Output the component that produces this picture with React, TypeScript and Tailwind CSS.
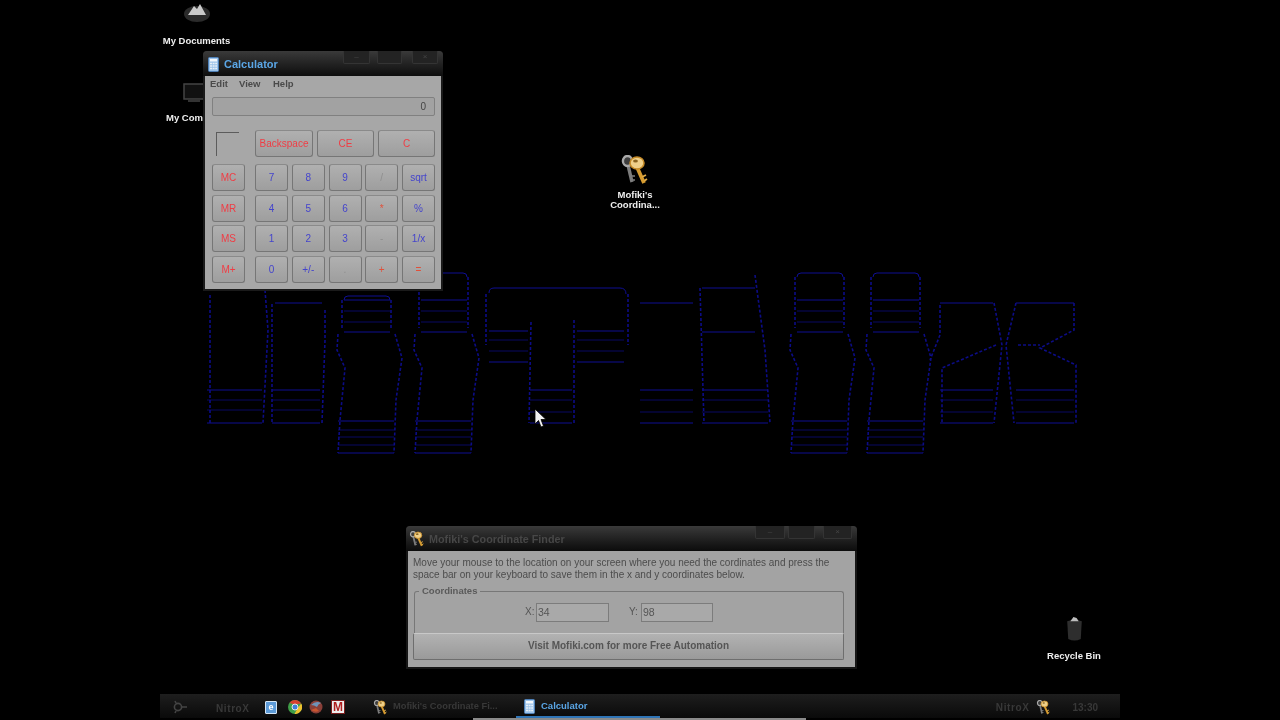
import React from "react";

const hatch = (x1: number, x2: number, ys: number[]) =>
  ys.map((y) => `M${x1} ${y}H${x2}`).join("");
const side = (x: number, y1: number, y2: number) => `M${x} ${y1}V${y2}`;

// one of the tall "D" shaped letters of the wallpaper
function letterD(dx: number, top: number) {
  const solid =
    `M${dx + 8} ${top + 4}Q${dx + 8} ${top} ${dx + 12} ${top}H${dx + 50}Q${dx + 54} ${top} ${dx + 54} ${top + 4}` +
    hatch(dx + 8, dx + 54, [300, 332]) +
    hatch(dx + 2, dx + 58, [421, 453]);
  const faint = hatch(dx + 8, dx + 54, [311, 322]) + hatch(dx + 2, dx + 58, [430, 437, 445]);
  const dotted =
    side(dx + 6, top + 4, 328) +
    side(dx + 55, top + 4, 328) +
    `M${dx + 2} 334L${dx + 1} 350L${dx + 9} 368L${dx + 4} 420L${dx + 2} 453` +
    `M${dx + 59} 334L${dx + 66} 358L${dx + 60} 400L${dx + 58} 453`;
  return { solid, faint, dotted };
}

function Wallpaper() {
  const ds = [letterD(336, 296), letterD(413, 273), letterD(789, 273), letterD(865, 273)];
  const solid =
    ds.map((d) => d.solid).join("") +
    hatch(207, 262, [390, 423]) +
    hatch(272, 320, [390, 423]) +
    "M275 303H322" +
    "M489 293Q489 288 494 288H620Q626 288 626 294" +
    hatch(489, 528, [331, 362]) +
    hatch(577, 624, [331, 362]) +
    hatch(530, 572, [390, 423]) +
    hatch(640, 693, [303, 390, 423]) +
    hatch(702, 755, [288, 332]) +
    hatch(702, 768, [390, 423]) +
    hatch(940, 993, [303, 390, 423]) +
    hatch(1016, 1074, [303, 390, 423]);
  const faint =
    ds.map((d) => d.faint).join("") +
    hatch(207, 262, [400, 410]) +
    hatch(272, 320, [400, 410]) +
    hatch(489, 528, [340, 351]) +
    hatch(577, 624, [340, 351]) +
    hatch(530, 572, [400, 412]) +
    hatch(640, 693, [400, 412]) +
    hatch(702, 768, [400, 412]) +
    hatch(940, 993, [400, 412]) +
    hatch(1016, 1074, [400, 412]);
  const dotted =
    ds.map((d) => d.dotted).join("") +
    side(210, 295, 423) +
    "M265 290L268 330L263 423" +
    "M272 304V423M325 310V340L322 423" +
    side(486, 294, 345) +
    side(628, 294, 345) +
    "M531 322L529 423M574 320V423" +
    "M700 288L704 423M755 275L765 350L770 423" +
    "M940 305V335L930 360M996 345L942 368V423" +
    "M994 303L1002 345L994 423M1016 303L1006 345L1014 423" +
    "M1074 303V330L1040 348L1076 365V423M1018 345H1040";

  return (
    <svg
      className="absolute left-0 top-0"
      width="1280"
      height="720"
      viewBox="0 0 1280 720"
      fill="none"
    >
      <path d={faint} stroke="#080862" strokeWidth="1" />
      <path d={solid} stroke="#0e0e92" strokeWidth="1" />
      <path d={dotted} stroke="#0c0c86" strokeWidth="1.6" strokeDasharray="3 2" />
    </svg>
  );
}

function KeysIcon({ size = 28 }: { size?: number }) {
  return (
    <svg width={size} height={size} viewBox="0 0 28 30" fill="none">
      {/* grey key behind */}
      <path d="M7 10L11 27" stroke="#7d7d7d" strokeWidth="3.4" />
      <path d="M10 21h4M11 25h3" stroke="#7d7d7d" strokeWidth="1.6" />
      <ellipse cx="6.5" cy="6" rx="4.6" ry="5" fill="#3d3d3d" stroke="#a9a9a9" strokeWidth="2.4" />
      {/* gold key in front */}
      <path d="M16 12L23 28" stroke="#d69b2f" strokeWidth="3.8" />
      <path d="M21 22l4-2M23 26l3-2" stroke="#e0aa45" strokeWidth="1.8" />
      <ellipse cx="16" cy="8" rx="7" ry="6" fill="#efd08a" stroke="#c58b28" strokeWidth="1.6" />
      <ellipse cx="14.5" cy="6" rx="2.4" ry="1.6" fill="#8a6420" />
    </svg>
  );
}

function CalcIcon() {
  return (
    <svg width="11" height="15" viewBox="0 0 11 15">
      <rect x="0.5" y="0.5" width="10" height="14" rx="1" fill="#9cc3ea" stroke="#4d7fb6" />
      <rect x="2" y="2" width="7" height="2.5" fill="#f4f8fc" />
      <path d="M2 6.5h7M2 9h7M2 11.5h7" stroke="#e8f0f8" strokeWidth="1.3" strokeDasharray="2 0.6" />
    </svg>
  );
}

function DesktopLabel({ children }: { children: React.ReactNode }) {
  return (
    <div className="text-center text-[9.5px] leading-[10px] font-bold text-[#eeeeee] whitespace-nowrap">
      {children}
    </div>
  );
}

function CalcButton({
  label,
  color = "blue",
  className = "",
}: {
  label: string;
  color?: "red" | "blue" | "orange" | "gray";
  className?: string;
}) {
  const tone = {
    red: "text-[#f03c44]",
    blue: "text-[#4444cc]",
    orange: "text-[#e0503a]",
    gray: "text-[#8f8f8f]",
  }[color];
  return (
    <div
      className={`shrink-0 h-[27px] flex items-center justify-center rounded-[3px] border border-[#767676] border-t-[#8a8a8a] bg-gradient-to-b from-[#b0b0b0] to-[#9e9e9e] text-[10px] ${tone} ${className}`}
    >
      {label}
    </div>
  );
}

function TitleButtons({ widths, gaps }: { widths: number[]; gaps: number[] }) {
  return (
    <div className="flex">
      {widths.map((w, i) => (
        <div
          key={i}
          style={{ width: w, marginLeft: i > 0 ? gaps[i - 1] : 0 }}
          className="h-[13px] rounded-b-[2px] border border-t-0 border-[#343434] bg-[#232323] flex items-center justify-center text-[8px] leading-none text-[#454545]"
        >
          {i === 0 ? "–" : i === 2 ? "×" : ""}
        </div>
      ))}
    </div>
  );
}

const rows: [string, "blue" | "orange" | "gray"][][] = [
  [["7", "blue"], ["8", "blue"], ["9", "blue"], ["/", "gray"], ["sqrt", "blue"]],
  [["4", "blue"], ["5", "blue"], ["6", "blue"], ["*", "orange"], ["%", "blue"]],
  [["1", "blue"], ["2", "blue"], ["3", "blue"], ["-", "gray"], ["1/x", "blue"]],
  [["0", "blue"], ["+/-", "blue"], [".", "gray"], ["+", "orange"], ["=", "orange"]],
];

function Calculator() {
  return (
    <div className="absolute left-[203px] top-[51px] w-[240px] h-[240px] flex flex-col rounded-t-[4px] bg-[#1a1a1a] px-[2px] pb-[2px]">
      <div className="h-[25px] shrink-0 flex items-start bg-gradient-to-b from-[#3a3a3a] to-[#0e0e0e] -mx-[2px] rounded-t-[4px] pl-[5px] pr-[5px]">
        <div className="mt-[5px] flex items-center gap-[5px]">
          <CalcIcon />
          <span className="text-[11px] font-bold text-[#5aa6e6]">Calculator</span>
        </div>
        <div className="ml-auto">
          <TitleButtons widths={[27, 25, 26]} gaps={[7, 10]} />
        </div>
      </div>
      <div className="flex-1 bg-[#a7a7a7] pl-[7px] pr-[6px]">
        <div className="h-[16px] flex items-center text-[9.5px] font-bold text-[#4a4a4a] -ml-[2px]">
          <span className="w-[29px]">Edit</span>
          <span className="w-[34px]">View</span>
          <span>Help</span>
        </div>
        <div className="mt-[5px] h-[19px] rounded-[2px] border border-[#808080] bg-[#a2a2a2] flex items-center justify-end pr-[8px] pb-[1px] text-[10px] text-[#444444]">
          0
        </div>
        <div className="mt-[14px] flex">
          <div className="shrink-0 ml-[4px] mt-[2px] w-[23px] h-[24px] border-t border-l border-[#5c5c5c]" />
          <div className="ml-[16px] flex">
            <CalcButton label="Backspace" color="red" className="w-[58px]" />
            <CalcButton label="CE" color="red" className="w-[57px] ml-[4px]" />
            <CalcButton label="C" color="red" className="w-[57px] ml-[4px]" />
          </div>
        </div>
        <div className="mt-[7px] flex">
          <div className="flex flex-col gap-[3.7px]">
            {["MC", "MR", "MS", "M+"].map((m) => (
              <CalcButton key={m} label={m} color="red" className="w-[33px]" />
            ))}
          </div>
          <div className="ml-[10px] grid grid-cols-[repeat(5,33px)] gap-x-[3.75px] gap-y-[3.7px]">
            {rows.flat().map(([label, color], i) => (
              <CalcButton key={i} label={label} color={color} />
            ))}
          </div>
        </div>
      </div>
    </div>
  );
}

function CoordinateFinder() {
  return (
    <div className="absolute left-[406px] top-[526px] w-[451px] h-[143px] flex flex-col rounded-t-[4px] bg-[#161616] px-[2px] pb-[2px]">
      <div className="h-[25px] shrink-0 flex items-start bg-gradient-to-b from-[#3a3a3a] to-[#0c0c0c] -mx-[2px] rounded-t-[4px] pl-[3px] pr-[5px]">
        <div className="mt-[5px] flex items-center gap-[4px]">
          <KeysIcon size={16} />
          <span className="text-[10.8px] font-bold text-[#474747]">Mofiki's Coordinate Finder</span>
        </div>
        <div className="ml-auto">
          <TitleButtons widths={[30, 27, 29]} gaps={[3, 8]} />
        </div>
      </div>
      <div className="flex-1 bg-[#a3a3a3] px-[5px]">
        <p className="mt-[6px] text-[10px] leading-[12px] text-[#4c4c4c] whitespace-nowrap">
          Move your mouse to the location on your screen where you need the cordinates and press the
          <br />
          space bar on your keyboard to save them in the x and y coordinates below.
        </p>
        <div className="relative mt-[10px] ml-[1px] w-[430px] h-[42px] rounded-t-[3px] border border-b-0 border-[#777777] flex items-start pt-[11px]">
          <span className="absolute -top-[7px] left-[4px] bg-[#a3a3a3] px-[3px] text-[9.5px] leading-[12px] font-bold text-[#5a5a5a]">
            Coordinates
          </span>
          <div className="ml-[110px] flex items-center">
            <span className="w-[11px] pb-[3px] text-[10px] text-[#555555]">X:</span>
            <div className="w-[73px] h-[19px] border border-[#7c7c7c] bg-[#a9a9a9] pl-[1px] text-[10.5px] leading-[17px] text-[#555555]">
              34
            </div>
          </div>
          <div className="ml-[20px] flex items-center">
            <span className="w-[12px] pb-[3px] text-[10px] text-[#555555]">Y:</span>
            <div className="w-[72px] h-[19px] border border-[#7c7c7c] bg-[#a9a9a9] pl-[1px] text-[10.5px] leading-[17px] text-[#555555]">
              98
            </div>
          </div>
        </div>
        <div className="w-[431px] h-[27px] rounded-[2px] border border-[#6e6e6e] border-t-[#c8c8c8] bg-gradient-to-b from-[#b2b2b2] to-[#9a9a9a] flex items-center justify-center pb-[3px] text-[10px] font-bold text-[#555555]">
          Visit Mofiki.com for more Free Automation
        </div>
      </div>
    </div>
  );
}

function ChromeIcon() {
  return (
    <svg width="14" height="14" viewBox="0 0 14 14">
      <circle cx="7" cy="7" r="7" fill="#3f9e48" />
      <path d="M7 0A7 7 0 0 1 13.1 3.6L7 4.5L1.6 3Q3.5 0 7 0Z" fill="#d8402f" />
      <path d="M13.2 3.6A7 7 0 0 1 6.5 14L9.5 8.5Z" fill="#f0c22e" />
      <circle cx="7" cy="7" r="3" fill="#3f7fdc" stroke="#e8e8e8" />
    </svg>
  );
}

function Taskbar() {
  const dim = "font-bold text-[#383838] whitespace-nowrap";
  return (
    <div className="absolute left-[160px] top-[694px] w-[960px] h-[24px] flex items-center pt-[2px] bg-gradient-to-b from-[#1e1e1e] to-[#0a0a0a]">
      {/* start orb */}
      <div className="shrink-0 ml-[12px] w-[17px] flex justify-center">
        <svg width="17" height="14" viewBox="0 0 17 14" fill="none" stroke="#444444" strokeWidth="1.6">
          <circle cx="6" cy="7" r="3.6" />
          <path d="M10 7h5M3 1l1 2M3 13l1-2" />
        </svg>
      </div>
      <div className="shrink-0 ml-[27px] w-[44px]">
        <span className={`${dim} text-[10px] tracking-[0.6px]`}>NitroX</span>
      </div>
      <div className="shrink-0 ml-[5px] flex items-center">
        <div className="w-[12px] h-[13px] rounded-[1px] bg-[#5d9bd8] border border-[#d5e6f5] text-[9px] leading-[11px] text-center font-bold text-white">
          e
        </div>
        <div className="ml-[11px]">
          <ChromeIcon />
        </div>
        <svg className="ml-[7px]" width="14" height="14" viewBox="0 0 14 14">
          <circle cx="7" cy="7" r="6.5" fill="#8a3f38" />
          <path d="M2 5Q7 0 12 3Q9 4 8 7Q5 5 2 5Z" fill="#6f93b8" />
          <path d="M2 10Q6 13 10 11L7 8Z" fill="#c9552f" />
        </svg>
        <div className="ml-[8px] w-[14px] h-[14px] bg-[#eeeeee] border border-[#7a1c1c] text-[12px] leading-[13px] text-center font-bold text-[#b01f1f]">
          M
        </div>
      </div>
      <div className="shrink-0 ml-[28px] w-[135px] flex items-center gap-[5px]">
        <KeysIcon size={15} />
        <span className={`${dim} text-[9.3px]`}>Mofiki's Coordinate Fi...</span>
      </div>
      <div className="shrink-0 ml-[8px] w-[144px] h-[24px] -mt-[2px] flex items-center pt-[2px] pl-[8px] gap-[6px] border-b-2 border-[#2f74b5]">
        <CalcIcon />
        <span className="text-[9.5px] font-bold text-[#5aa6e6]">Calculator</span>
      </div>
      <div className="ml-auto flex items-center">
        <span className={`${dim} text-[10px] tracking-[0.6px]`}>NitroX</span>
        <div className="ml-[7px]">
          <KeysIcon size={15} />
        </div>
        <span className={`${dim} text-[10px] ml-[21px] mr-[22px]`}>13:30</span>
      </div>
    </div>
  );
}

export default function App() {
  return (
    <div className="relative w-[1280px] h-[720px] overflow-hidden bg-black blur-[0.3px] font-['Liberation_Sans',Arial,sans-serif]">
      <Wallpaper />

      {/* desktop icons */}
      <div className="absolute left-[163px] top-[2px] w-[67px] flex flex-col items-center gap-[12px]">
        <svg width="28" height="22" viewBox="0 0 28 22">
          <ellipse cx="14" cy="12" rx="13" ry="8" fill="#2b2b2b" />
          <path d="M5 13L11 4L14 7L17 2L23 13Z" fill="#c9c9c9" />
        </svg>
        <DesktopLabel>My Documents</DesktopLabel>
      </div>
      <div className="absolute left-[166px] top-[83px] w-[70px] flex flex-col gap-[9px]">
        <svg className="ml-[17px]" width="22" height="21" viewBox="0 0 22 21">
          <rect x="1" y="1" width="20" height="15" fill="#111111" stroke="#444444" strokeWidth="1.5" />
          <rect x="5" y="17" width="12" height="2" fill="#333333" />
        </svg>
        <div className="text-left text-[9.5px] leading-[10px] font-bold text-[#eeeeee] whitespace-nowrap">
          My Computer
        </div>
      </div>
      <div className="absolute left-[605px] top-[155px] w-[60px] flex flex-col items-center gap-[5px]">
        <KeysIcon size={30} />
        <DesktopLabel>Mofiki's</DesktopLabel>
        <div className="-mt-[5px]">
          <DesktopLabel>Coordina...</DesktopLabel>
        </div>
      </div>
      <div className="absolute left-[1044px] top-[616px] w-[60px] flex flex-col items-center gap-[10px]">
        <svg width="17" height="25" viewBox="0 0 16 24">
          <path d="M1 5Q8 2 15 5L14 22Q8 25 2 22Z" fill="#2e2e2e" />
          <path d="M4 5L7 1L10 2L12 5Z" fill="#bdbdbd" />
        </svg>
        <DesktopLabel>Recycle Bin</DesktopLabel>
      </div>

      <Calculator />
      <CoordinateFinder />
      <Taskbar />

      {/* strip of the video player under the taskbar */}
      <div className="absolute left-[473px] top-[718px] w-[333px] h-[2px] bg-[#8a8a8a]" />

      {/* mouse pointer */}
      <svg className="absolute left-[534px] top-[408px]" width="13" height="21" viewBox="0 0 13 21">
        <path d="M1 1V16L4.5 12.5L7 19L9.5 18L7 11.5H12Z" fill="#f2f2f2" stroke="#000000" strokeWidth="0.8" />
      </svg>
    </div>
  );
}
